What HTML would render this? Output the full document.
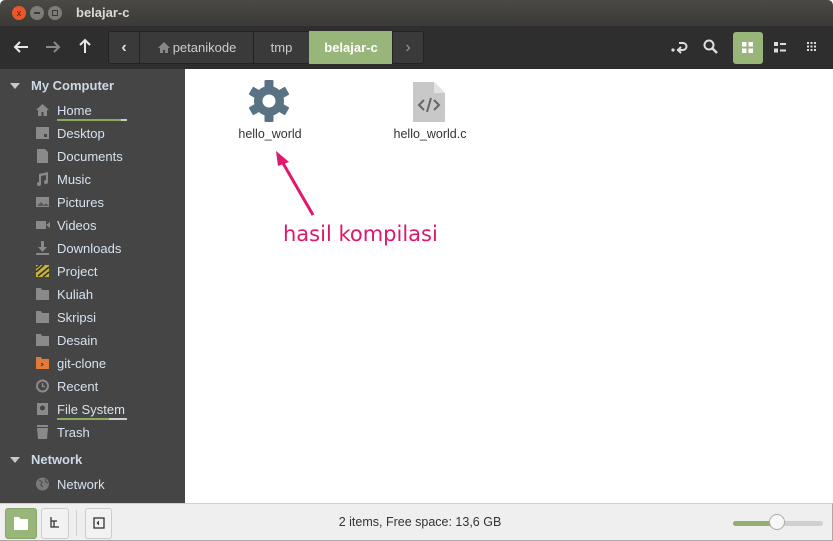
<!DOCTYPE html>
<html><head><meta charset="utf-8"><style>
*{margin:0;padding:0;box-sizing:border-box}
body{width:833px;height:541px;overflow:hidden;background:#fff;font-family:"Liberation Sans",sans-serif;position:relative}
.abs{position:absolute}
#title{left:0;top:0;width:833px;height:26px;background:linear-gradient(#4a4945,#3b3a36);border-radius:5px 5px 0 0}
#tool{left:0;top:26px;width:833px;height:43px;background:#2e2e2e}
#side{left:0;top:69px;width:185px;height:434px;background:#454545}
.si{position:absolute;left:57px;font-size:13px;color:#d6e2ef}
.ic{position:absolute;left:35px;width:15px;height:14px}
.hd{position:absolute;left:31px;font-size:13px;font-weight:bold;color:#cdd9e6}
.tri{position:absolute;left:10px;width:0;height:0;border-left:5px solid transparent;border-right:5px solid transparent;border-top:6px solid #c8c8c8}
#status{left:0;top:503px;width:833px;height:38px;background:#efefef;border-top:1px solid #cfcfcf;border-right:1px solid #aaa;border-bottom:1px solid #aaa}
.seg{position:absolute;top:31px;height:33px;background:#3a3a3a;border:1px solid #232323;color:#ccc;font-size:13px;display:flex;align-items:center;justify-content:center}
</style></head><body>
<div id="title" class="abs">
 <div class="abs" style="left:12px;top:6px;width:14px;height:14px;border-radius:50%;background:#e9582c;color:#5a1a08;font-size:9px;text-align:center;line-height:14px">x</div>
 <div class="abs" style="left:30px;top:6px;width:14px;height:14px;border-radius:50%;background:#7d7c77"><div class="abs" style="left:4px;top:6px;width:6px;height:1.5px;background:#3a3a36"></div></div>
 <div class="abs" style="left:48px;top:6px;width:14px;height:14px;border-radius:50%;background:#7d7c77"><div class="abs" style="left:4px;top:4px;width:6px;height:6px;border:1px solid #3a3a36"></div></div>
 <div class="abs" style="left:76px;top:5px;font-size:13px;font-weight:bold;color:#dcdad4">belajar-c</div>
</div>
<div id="tool" class="abs">
 <svg class="abs" style="left:12px;top:12px" width="18" height="18"><path d="M16 9H3M8 4L3 9l5 5" stroke="#e8e8e8" stroke-width="2" fill="none"/></svg>
 <svg class="abs" style="left:44px;top:12px" width="18" height="18"><path d="M2 9h13M10 4l5 5-5 5" stroke="#888" stroke-width="2" fill="none"/></svg>
 <svg class="abs" style="left:76px;top:11px" width="18" height="18"><path d="M9 16V3M4 8l5-5 5 5" stroke="#e8e8e8" stroke-width="2" fill="none"/></svg>
 <svg class="abs" style="left:670px;top:12px" width="20" height="18"><circle cx="3" cy="12" r="1.6" fill="#ddd"/><path d="M7 12h6a3.5 3.5 0 0 0 0-7H9M11 9l-3 3 3 3" stroke="#ddd" stroke-width="2" fill="none"/></svg>
 <svg class="abs" style="left:702px;top:12px" width="18" height="18"><circle cx="7" cy="7" r="4.5" stroke="#ddd" stroke-width="2" fill="none"/><path d="M10.5 10.5l4.5 4.5" stroke="#ddd" stroke-width="2.4"/></svg>
 <div class="abs" style="left:733px;top:6px;width:30px;height:32px;background:#98b57a;border-radius:3px"></div>
 <svg class="abs" style="left:741px;top:15px" width="14" height="14"><rect x="1" y="1" width="4.5" height="4.5" fill="#fff"/><rect x="7.5" y="1" width="4.5" height="4.5" fill="#fff"/><rect x="1" y="7.5" width="4.5" height="4.5" fill="#fff"/><rect x="7.5" y="7.5" width="4.5" height="4.5" fill="#fff"/></svg>
 <svg class="abs" style="left:773px;top:15px" width="14" height="14"><rect x="1" y="1" width="4" height="4" fill="#ddd"/><rect x="1" y="7.5" width="4" height="4" fill="#ddd"/><rect x="7" y="2" width="6" height="2" fill="#ddd"/><rect x="7" y="8.5" width="6" height="2" fill="#ddd"/></svg>
 <svg class="abs" style="left:806px;top:15px" width="12" height="12"><g fill="#ddd"><rect x="1" y="1" width="2" height="2"/><rect x="4.5" y="1" width="2" height="2"/><rect x="8" y="1" width="2" height="2"/><rect x="1" y="4.5" width="2" height="2"/><rect x="4.5" y="4.5" width="2" height="2"/><rect x="8" y="4.5" width="2" height="2"/><rect x="1" y="8" width="2" height="2"/><rect x="4.5" y="8" width="2" height="2"/><rect x="8" y="8" width="2" height="2"/></g></svg>
</div>
<div class="seg" style="left:108px;width:32px;border-radius:3px 0 0 3px;color:#e0e0e0;font-size:16px;font-weight:bold">‹</div>
<div class="seg" style="left:139px;width:115px"><svg width="14" height="13" style="margin-right:2px"><path d="M7 1L1 7h2v5h3V9h2v3h3V7h2z" fill="#888"/></svg>petanikode</div>
<div class="seg" style="left:253px;width:57px">tmp</div>
<div class="seg" style="left:309px;width:84px;background:#98b57a;color:#fff;font-weight:bold;border-color:#98b57a">belajar-c</div>
<div class="seg" style="left:392px;width:32px;border-radius:0 3px 3px 0;color:#999;font-size:16px">›</div>

<div id="side" class="abs">
 <div class="tri" style="top:14px"></div><div class="hd" style="top:9px">My Computer</div>
 <svg class="ic" style="top:34px" viewBox="0 0 15 14"><path d="M7.5 1L1 7h2v6h3.5V9h2v4H12V7h2z" fill="#8a8a8a"/></svg>
 <div class="si" style="top:34px">Home</div><div class="abs" style="left:57px;top:50px;width:64px;height:2px;background:#8aab5a"></div><div class="abs" style="left:121px;top:50px;width:6px;height:2px;background:#ccc"></div>
 <svg class="ic" style="top:57px" viewBox="0 0 15 14"><path d="M1 1h13v12H1z" fill="#8a8a8a"/><rect x="9" y="8" width="3" height="3" fill="#454545"/></svg><div class="si" style="top:57px">Desktop</div>
 <svg class="ic" style="top:80px" viewBox="0 0 15 14"><path d="M2 0h8l3 3v11H2z" fill="#8a8a8a"/></svg><div class="si" style="top:80px">Documents</div>
 <svg class="ic" style="top:103px" viewBox="0 0 15 14"><path d="M4 2l9-2v10a2 2 0 1 1-2-2V3L6 4v8a2 2 0 1 1-2-2z" fill="#8a8a8a"/></svg><div class="si" style="top:103px">Music</div>
 <svg class="ic" style="top:126px" viewBox="0 0 15 14"><rect x="1" y="2" width="13" height="10" fill="#8a8a8a"/><path d="M2 11l4-4 3 3 2-2 3 3z" fill="#5a5a5a"/></svg><div class="si" style="top:126px">Pictures</div>
 <svg class="ic" style="top:149px" viewBox="0 0 15 14"><rect x="1" y="3" width="10" height="8" fill="#8a8a8a"/><path d="M11 7l4-3v6z" fill="#8a8a8a"/></svg><div class="si" style="top:149px">Videos</div>
 <svg class="ic" style="top:172px" viewBox="0 0 15 14"><path d="M6 0h3v6h3l-4.5 5L3 6h3z M1 12h13v2H1z" fill="#8a8a8a"/></svg><div class="si" style="top:172px">Downloads</div>
 <svg class="ic" style="top:195px" viewBox="0 0 15 14"><rect x="1" y="1" width="13" height="12" fill="#c9b43a"/><path d="M1 4l4-3M1 8l8-7M3 12l11-9M8 13l6-5" stroke="#333" stroke-width="1.6"/></svg><div class="si" style="top:195px">Project</div>
 <svg class="ic" style="top:218px" viewBox="0 0 15 14"><path d="M1 1h5l1 2h7v10H1z" fill="#8a8a8a"/></svg><div class="si" style="top:218px">Kuliah</div>
 <svg class="ic" style="top:241px" viewBox="0 0 15 14"><path d="M1 1h5l1 2h7v10H1z" fill="#8a8a8a"/></svg><div class="si" style="top:241px">Skripsi</div>
 <svg class="ic" style="top:264px" viewBox="0 0 15 14"><path d="M1 1h5l1 2h7v10H1z" fill="#8a8a8a"/></svg><div class="si" style="top:264px">Desain</div>
 <svg class="ic" style="top:287px" viewBox="0 0 15 14"><path d="M1 1h5l1 2h7v10H1z" fill="#e07b3a"/><path d="M6 7l2 1.5L6 10" stroke="#6a2a08" fill="none"/></svg><div class="si" style="top:287px">git-clone</div>
 <svg class="ic" style="top:310px" viewBox="0 0 15 14"><circle cx="7.5" cy="7" r="5.5" stroke="#8a8a8a" stroke-width="2" fill="none"/><path d="M7.5 4v3.5H10" stroke="#8a8a8a" stroke-width="1.5" fill="none"/></svg><div class="si" style="top:310px">Recent</div>
 <svg class="ic" style="top:333px" viewBox="0 0 15 14"><rect x="2" y="1" width="11" height="12" fill="#8a8a8a"/><circle cx="7.5" cy="6" r="2.5" fill="#454545"/></svg><div class="si" style="top:333px">File System</div><div class="abs" style="left:57px;top:349px;width:52px;height:2px;background:#8aab5a"></div><div class="abs" style="left:109px;top:349px;width:18px;height:2px;background:#ccc"></div>
 <svg class="ic" style="top:356px" viewBox="0 0 15 14"><rect x="2" y="0" width="11" height="2" fill="#8a8a8a"/><path d="M2 3h11l-1 11H3z" fill="#8a8a8a"/></svg><div class="si" style="top:356px">Trash</div>
 <div class="tri" style="top:388px"></div><div class="hd" style="top:383px">Network</div>
 <svg class="ic" style="top:408px" viewBox="0 0 15 14"><circle cx="7.5" cy="7" r="6.5" fill="#7a7a7a"/><path d="M4 3l3 2-1 3 2 2M10 2l1 3 2 1" stroke="#555" stroke-width="1.5" fill="none"/></svg><div class="si" style="top:408px">Network</div>
</div>

<svg class="abs" style="left:247px;top:79px" width="44" height="44" viewBox="-22 -22 44 44">
 <g fill="#5a7384">
  <circle r="15"/>
  <g id="t"><rect x="-4.5" y="-21" width="9" height="9" rx="1"/></g>
  <rect x="-4.5" y="-21" width="9" height="9" rx="1" transform="rotate(60)"/>
  <rect x="-4.5" y="-21" width="9" height="9" rx="1" transform="rotate(120)"/>
  <rect x="-4.5" y="-21" width="9" height="9" rx="1" transform="rotate(180)"/>
  <rect x="-4.5" y="-21" width="9" height="9" rx="1" transform="rotate(240)"/>
  <rect x="-4.5" y="-21" width="9" height="9" rx="1" transform="rotate(300)"/>
 </g>
 <circle r="6.5" fill="#fff"/>
</svg>
<div class="abs" style="left:220px;top:127px;width:100px;text-align:center;font-size:12.5px;color:#333">hello_world</div>

<svg class="abs" style="left:412px;top:81px" width="34" height="42"><path d="M1 1h21l11 11v29H1z" fill="#c8c8c8"/><path d="M22 1v11h11z" fill="#e2e2e2"/><path d="M12 19l-5 5 5 5M22 19l5 5-5 5M19 17l-4 14" stroke="#666" stroke-width="2" fill="none"/></svg>
<div class="abs" style="left:380px;top:127px;width:100px;text-align:center;font-size:12.5px;color:#333">hello_world.c</div>

<svg class="abs" style="left:270px;top:148px" width="50" height="72"><path d="M43 67L10 10" stroke="#e0176a" stroke-width="3"/><path d="M6 3L19 14 8 18z" fill="#e0176a"/></svg>
<div class="abs" style="left:283px;top:222px;font-family:'DejaVu Sans',sans-serif;font-size:21px;color:#e0176a">hasil kompilasi</div>

<div id="status" class="abs">
 <div class="abs" style="left:5px;top:4px;width:32px;height:31px;background:#98b57a;border-radius:3px;border:1px solid #88a56a"></div>
 <svg class="abs" style="left:14px;top:13px" width="14" height="13"><path d="M0 0h5l1.5 2H14v11H0z" fill="#fff"/></svg>
 <div class="abs" style="left:41px;top:4px;width:28px;height:31px;border:1px solid #ccc;border-radius:3px;background:#f2f2f2"></div>
 <svg class="abs" style="left:49px;top:13px" width="12" height="12"><path d="M2 0v10h8M2 4h6M5 4v6" stroke="#333" stroke-width="1.3" fill="none"/></svg>
 <div class="abs" style="left:76px;top:6px;width:1px;height:26px;background:#d0d0d0"></div>
 <div class="abs" style="left:85px;top:4px;width:27px;height:31px;border:1px solid #ccc;border-radius:3px;background:#f2f2f2"></div>
 <svg class="abs" style="left:93px;top:13px" width="12" height="12"><rect x="1" y="1" width="10" height="10" stroke="#333" stroke-width="1.3" fill="none"/><path d="M6 3.5L3.5 6 6 8.5z" fill="#333"/></svg>
 <div class="abs" style="left:0;top:11px;width:840px;text-align:center;font-size:12.5px;color:#333">2 items, Free space: 13,6 GB</div>
 <div class="abs" style="left:733px;top:17px;width:90px;height:5px;border-radius:3px;background:#cfcfcf"></div>
 <div class="abs" style="left:733px;top:17px;width:44px;height:5px;border-radius:3px;background:#8fb070"></div>
 <div class="abs" style="left:769px;top:10px;width:16px;height:16px;border-radius:50%;background:#f7f7f7;border:1px solid #aaa"></div>
</div>
</body></html>
